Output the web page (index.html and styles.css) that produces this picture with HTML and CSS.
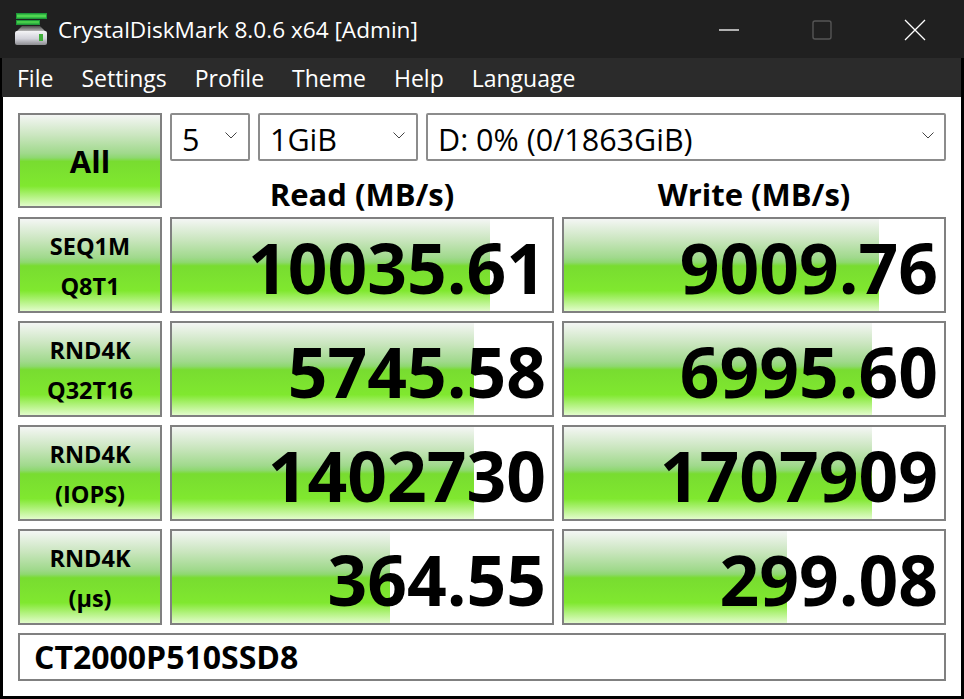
FILE: index.html
```html
<!DOCTYPE html>
<html lang="en">
<head>
<meta charset="utf-8">
<title>CrystalDiskMark 8.0.6 x64 [Admin]</title>
<link rel="stylesheet" href="styles.css">
</head>
<body>
<div class="window">
  <header class="titlebar">
    <svg class="app-icon" width="32" height="32" viewBox="0 0 32 32" aria-hidden="true">
      <defs>
        <linearGradient id="disk" x1="0" y1="0" x2="0" y2="1"><stop offset="0" stop-color="#f4f4f6"/><stop offset=".55" stop-color="#d2d2da"/><stop offset="1" stop-color="#8c8c90"/></linearGradient>
        <linearGradient id="shoulder" x1="0" y1="0" x2="0" y2="1"><stop offset="0" stop-color="#4a4a4a"/><stop offset="1" stop-color="#c8c8c8"/></linearGradient>
      </defs>
      <path d="M1 0h31v6H1z" fill="#1f9a3a"/>
      <path d="M2 1.500h29v3H2z" fill="#4fd650"/>
      <path d="M1 7h24v5H1z" fill="#1f9a3a"/>
      <path d="M2 8h22v2.500H2z" fill="#47cc4a"/>
      <path d="M7 13h18l6 6H1z" fill="url(#shoulder)"/>
      <rect x="0" y="18" width="32" height="14" rx="2" fill="url(#disk)"/>
      <rect x="24" y="21" width="4" height="7" fill="#3fae3a"/>
    </svg>
    <span class="app-title">CrystalDiskMark 8.0.6 x64 [Admin]</span>
    <div class="caption">
      <svg width="22" height="22" viewBox="0 0 22 22" aria-hidden="true"><path d="M1 11h20" stroke="#fff" stroke-width="1.3"/></svg>
      <svg width="22" height="22" viewBox="0 0 22 22" aria-hidden="true"><rect x="2" y="2" width="18" height="18" rx="2" fill="none" stroke="#555" stroke-width="1.4"/></svg>
      <svg width="22" height="22" viewBox="0 0 22 22" aria-hidden="true"><path d="M1 1l20 20M21 1L1 21" stroke="#fff" stroke-width="1.3"/></svg>
    </div>
  </header>
  <nav class="menubar">
    <span>File</span><span>Settings</span><span>Profile</span><span>Theme</span><span>Help</span><span>Language</span>
  </nav>
  <main class="content">
    <div class="top">
      <button class="tile tile-all">All</button>
      <div class="controls">
        <div class="selects">
          <div class="select select-count"><span>5</span><svg class="chev" width="12" height="7" viewBox="0 0 12 7"><path d="M.5.5L6 6l5.500-5.500" fill="none" stroke="#444" stroke-width="1"/></svg></div>
          <div class="select select-size"><span>1GiB</span><svg class="chev" width="12" height="7" viewBox="0 0 12 7"><path d="M.5.5L6 6l5.500-5.500" fill="none" stroke="#444" stroke-width="1"/></svg></div>
          <div class="select select-drive"><span>D: 0% (0/1863GiB)</span><svg class="chev" width="12" height="7" viewBox="0 0 12 7"><path d="M.5.5L6 6l5.500-5.500" fill="none" stroke="#444" stroke-width="1"/></svg></div>
        </div>
        <div class="heads"><div>Read (MB/s)</div><div>Write (MB/s)</div></div>
      </div>
    </div>
    <div class="rows">
      <button class="tile tile-row">SEQ1M<br>Q8T1</button>
      <div class="result" style="background-size:83.7% 100%">10035.61</div>
      <div class="result" style="background-size:82.9% 100%">9009.76</div>
      <button class="tile tile-row">RND4K<br>Q32T16</button>
      <div class="result" style="background-size:79.5% 100%">5745.58</div>
      <div class="result" style="background-size:81.05% 100%">6995.60</div>
      <button class="tile tile-row">RND4K<br>(IOPS)</button>
      <div class="result" style="background-size:79.5% 100%">1402730</div>
      <div class="result" style="background-size:81.05% 100%">1707909</div>
      <button class="tile tile-row">RND4K<br>(μs)</button>
      <div class="result" style="background-size:57.4% 100%">364.55</div>
      <div class="result" style="background-size:58.7% 100%">299.08</div>
    </div>
    <div class="model">CT2000P510SSD8</div>
  </main>
</div>
</body>
</html>
```
FILE: styles.css
```css
* { box-sizing: border-box; }
html, body { margin: 0; height: 100%; }
body { background: #000; font-family: "Open Sans", "Noto Sans", sans-serif; overflow: hidden; }
.window { width: 964px; height: 699px; display: flex; flex-direction: column; background: #fff; }
.titlebar { height: 58px; background: #202020; display: flex; align-items: center; padding-left: 15px; color: #fff; flex: none; }
.app-icon { flex: none; margin-top: -1px; }
.app-title { font-size: 22.6px; margin-left: 11px; white-space: nowrap; }
.caption { margin-left: auto; display: flex; gap: 71px; padding-right: 38px; margin-top: 1px; }
.caption svg { display: block; }
.menubar { height: 39px; flex: none; background: #2b2b2b; color: #fff; font-size: 23px; display: flex; gap: 28px; align-items: center; padding-left: 15px; border-left: 2px solid #000; border-right: 3px solid #000; }
.content { flex: 1; padding: 16px 15px 0; border-left: 3px solid #000; border-right: 3px solid #000; border-bottom: 3px solid #000; display: flex; flex-direction: column; background: #fff; }
.top { display: grid; grid-template-columns: 144px 1fr; grid-template-rows: 95px; column-gap: 8px; height: 95px; }
.tile, .result { border: 2px solid #808080; background-color: #fff; background-origin: padding-box; background-clip: padding-box; background-image: linear-gradient(to bottom, #f4f6f4 0%, #cbe6c0 22%, #a0d98c 42%, #8ed870 47%, #78dc30 51%, #80e82f 78%, #e2fccb 100%); background-repeat: no-repeat; }
.tile { padding: 0; margin: 0; font-family: inherit; font-weight: 700; color: #000; }
.tile-all { font-size: 31px; line-height: 1; padding-top: 2px; }
.tile-row { font-size: 23.500px; line-height: 40px; padding-top: 2px; }
.controls { display: flex; flex-direction: column; min-height: 0; }
.selects { display: flex; gap: 8px; height: 48px; flex: none; }
.select { border: 2px solid #8c8c8c; border-radius: 2px; height: 48px; display: flex; align-items: center; justify-content: space-between; padding: 0 11px 0 10px; font-size: 30.500px; background: #fff; color: #000; }
.select span { line-height: 1; padding-top: 4px; }
.chev { flex: none; margin-top: -4px; }
.select-count { width: 80px; }
.select-size { width: 160px; }
.select-drive { flex: 1; padding-right: 10px; }
.heads { display: grid; grid-template-columns: 384px 384px; column-gap: 8px; flex: 1; min-height: 0; }
.heads div { font-weight: 700; font-size: 31px; text-align: center; line-height: 30px; padding-top: 18px; }
.rows { display: grid; grid-template-columns: 144px 384px 384px; grid-auto-rows: 96px; gap: 8px; margin-top: 9px; }
.result { font-size: 69.500px; line-height: 92px; padding-top: 2px; font-weight: 700; text-align: right; padding-right: 6px; letter-spacing: 0; white-space: nowrap; overflow: hidden; color: #000; }
.model { height: 48px; margin-top: 8px; border: 2px solid #808080; font-weight: 700; font-size: 32px; line-height: 44px; padding-left: 14px; }
```
